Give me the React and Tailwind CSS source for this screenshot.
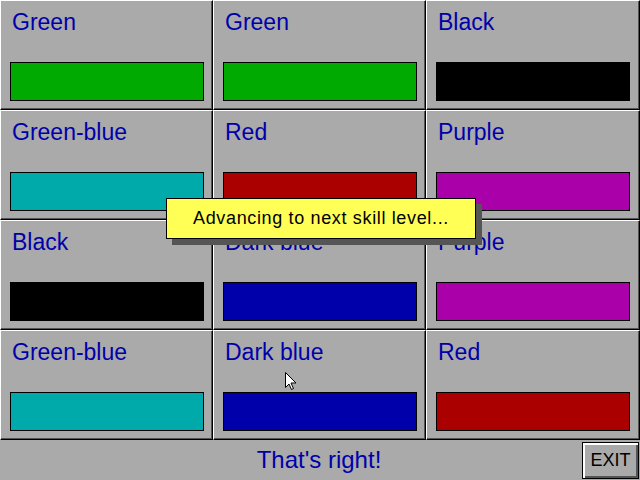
import React from "react";

const COLORS = {
  green: "bg-[#00aa00]",
  cyan: "bg-[#00aaaa]",
  black: "bg-[#000000]",
  red: "bg-[#aa0000]",
  purple: "bg-[#aa00aa]",
  blue: "bg-[#0000aa]",
};

const cells = [
  ["Green", "green"],
  ["Green", "green"],
  ["Black", "black"],
  ["Green-blue", "cyan"],
  ["Red", "red"],
  ["Purple", "purple"],
  ["Black", "black"],
  ["Dark blue", "blue"],
  ["Purple", "purple"],
  ["Green-blue", "cyan"],
  ["Dark blue", "blue"],
  ["Red", "red"],
];

function Cell({ label, color }) {
  return (
    <div className="flex flex-col border-t border-l border-t-white border-l-white border-r border-b border-r-black border-b-black shadow-[inset_-1px_-1px_0_#555555] pt-[8px] pl-[11px]">
      <div className="text-[23px] leading-[26px] text-[#0000aa] whitespace-nowrap">{label}</div>
      <div className={`mt-[27px] -ml-[2px] w-[194px] h-[39px] border border-black ${COLORS[color]}`} />
    </div>
  );
}

export default function App() {
  return (
    <div className="relative w-[640px] h-[480px] bg-[#aaaaaa] flex flex-col font-['Liberation_Sans',Arial,sans-serif] overflow-hidden">
      <div className="grid grid-cols-[213px_213px_214px] grid-rows-[110px_110px_110px_110px]">
        {cells.map(([l, c], i) => (
          <Cell key={i} label={l} color={c} />
        ))}
      </div>
      <div className="relative h-[40px] flex items-center justify-center">
        <span className="text-[24px] text-[#0000aa] -ml-[2px]">That's right!</span>
        <div className="absolute right-[1px] top-[2px] w-[57px] h-[37px] border border-black bg-[#aaaaaa] shadow-[inset_2px_2px_0_#ffffff,inset_-2px_-2px_0_#555555] flex items-center justify-center">
          <span className="text-[18px] text-black">EXIT</span>
        </div>
      </div>

      <div className="absolute left-[166px] top-[198px] w-[310px] h-[41px] bg-[#ffff55] border border-black shadow-[6px_6px_0_#555555] flex items-center justify-center">
        <span className="text-[18px] tracking-[0.65px] text-black">Advancing to next skill level...</span>
      </div>

      <svg className="absolute left-[285px] top-[372px]" width="13" height="20" viewBox="0 0 13 20">
        <path d="M0.5 0.5 L0.5 15.5 L4 12 L6.5 17.5 L8.5 16.5 L6 11 L11 11 Z" fill="#ffffff" stroke="#000000" strokeWidth="1" strokeLinejoin="miter" />
      </svg>
    </div>
  );
}
